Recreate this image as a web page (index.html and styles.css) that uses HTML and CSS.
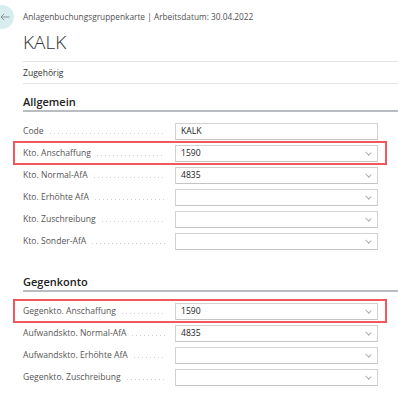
FILE: index.html
```html
<!DOCTYPE html>
<html lang="de">
<head>
    <meta charset="UTF-8">
    <title>Anlagenbuchungsgruppenkarte</title>
    <link rel="stylesheet" href="styles.css">
</head>
<body>
    <div class="page">
        <div class="header">
            <button class="back-btn" title="Zurück">
                <svg width="10" height="8" viewBox="0 0 10 8"><path d="M9.5 4H1M4.2 0.8L1 4l3.2 3.2" fill="none" stroke="#7c8c8e" stroke-width="0.9"/></svg>
            </button>
            <span class="breadcrumb">Anlagenbuchungsgruppenkarte | Arbeitsdatum: 30.04.2022</span>
        </div>
        <h1 class="title">KALK</h1>
        <div class="tabs"><span>Zugehörig</span></div>

        <div class="section">
            <h2>Allgemein</h2>
            <div class="fields">
                <div class="row">
                    <label><span>Code</span><i class="dots"></i></label>
                    <div class="input">KALK</div>
                </div>
                <div class="row marked">
                    <label><span>Kto. Anschaffung</span><i class="dots"></i></label>
                    <div class="input select">1590</div>
                </div>
                <div class="row">
                    <label><span>Kto. Normal-AfA</span><i class="dots"></i></label>
                    <div class="input select">4835</div>
                </div>
                <div class="row">
                    <label><span>Kto. Erhöhte AfA</span><i class="dots"></i></label>
                    <div class="input select"></div>
                </div>
                <div class="row">
                    <label><span>Kto. Zuschreibung</span><i class="dots"></i></label>
                    <div class="input select"></div>
                </div>
                <div class="row">
                    <label><span>Kto. Sonder-AfA</span><i class="dots"></i></label>
                    <div class="input select"></div>
                </div>
            </div>
        </div>

        <div class="section second">
            <h2>Gegenkonto</h2>
            <div class="fields">
                <div class="row marked">
                    <label><span>Gegenkto. Anschaffung</span><i class="dots"></i></label>
                    <div class="input select">1590</div>
                </div>
                <div class="row">
                    <label><span>Aufwandskto. Normal-AfA</span><i class="dots"></i></label>
                    <div class="input select">4835</div>
                </div>
                <div class="row">
                    <label><span>Aufwandskto. Erhöhte AfA</span><i class="dots"></i></label>
                    <div class="input select"></div>
                </div>
                <div class="row">
                    <label><span>Gegenkto. Zuschreibung</span><i class="dots"></i></label>
                    <div class="input select"></div>
                </div>
            </div>
        </div>
    </div>
</body>
</html>
```

FILE: styles.css
```css
body {
    font-family: "Open Sans", "Noto Sans", sans-serif;
    margin: 0;
    background: #fff;
    color: #212121;
    overflow: hidden;
}
.page {
    padding-left: 23px;
}
.header {
    display: flex;
    align-items: center;
    gap: 9px;
    height: 24px;
    padding-top: 5px;
}
.back-btn {
    width: 24px;
    height: 24px;
    margin-left: -33px;
    border: none;
    border-radius: 50%;
    background: #d8eeee;
    padding: 0 0 0 10px;
    display: flex;
    align-items: center;
    justify-content: flex-start;
}
.breadcrumb {
    font-size: 8.3px;
    color: #505050;
    margin-top: -2px;
}
.title {
    margin: 0;
    font-size: 19px;
    font-weight: 300;
    line-height: 26px;
    color: #333;
    padding-bottom: 6px;
    border-bottom: 1px solid #e3e3e3;
}
.tabs {
    height: 21px;
    display: flex;
    align-items: center;
    font-size: 8.6px;
    color: #333;
    border-bottom: 1px solid #e3e3e3;
}
.section h2 {
    margin: 0;
    padding-top: 10px;
    font-size: 11px;
    font-weight: 600;
    line-height: 16px;
    color: #212121;
    border-bottom: 2px solid #b9bdc2;
}
.section.second h2 {
    padding-top: 22px;
}
.fields {
    padding-top: 8px;
    padding-right: 20px;
}
.row {
    position: relative;
    display: flex;
    align-items: center;
    height: 22px;
}
.row.marked::before {
    content: "";
    position: absolute;
    top: -1px;
    bottom: -1px;
    left: -10px;
    right: -9px;
    border: 2px solid #f0585e;
}
.row label {
    width: 152px;
    display: flex;
    align-items: baseline;
    font-size: 8.6px;
    color: #555;
}
.dots {
    flex: 1;
    height: 1px;
    margin: 0 10px 0 6px;
    background-image: linear-gradient(to right, #d0d0d0 1px, transparent 1px);
    background-size: 4px 1px;
    background-repeat: repeat-x;
}
.input {
    flex: 1;
    height: 17px;
    box-sizing: border-box;
    border: 1px solid #d2d2d2;
    border-bottom-color: #c4c4c4;
    padding-left: 5px;
    font-size: 8.6px;
    line-height: 15px;
    color: #212121;
    position: relative;
}
.input.select::after {
    content: "";
    position: absolute;
    right: 6px;
    top: 4px;
    width: 4px;
    height: 4px;
    border-right: 1px solid #aaa;
    border-bottom: 1px solid #aaa;
    transform: rotate(45deg) scaleY(0.8);
}
```
